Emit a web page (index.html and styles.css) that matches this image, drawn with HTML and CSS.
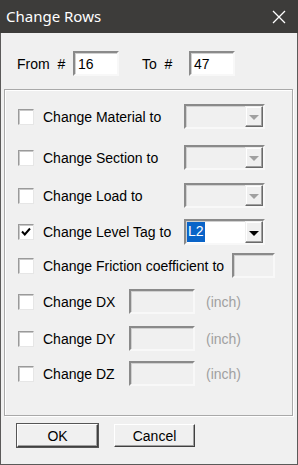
FILE: index.html
```html
<!DOCTYPE html>
<html>
<head>
    <title>Change Rows</title>
    <link rel="stylesheet" href="styles.css">
</head>
<body>
    <div class="window">
        <div class="titlebar">
            <span class="title">Change Rows</span>
            <span class="close">
                <svg width="14" height="14" viewBox="0 0 14 14"><path d="M1 1 L13 13 M13 1 L1 13" stroke="#fff" stroke-width="1.3"/></svg>
            </span>
        </div>

        <div class="content">
            <!-- Row range -->
            <div class="range">
                <span class="range-label from-label">From&nbsp; #</span>
                <div class="edit range-edit">16</div>
                <span class="range-label to-label">To&nbsp; #</span>
                <div class="edit range-edit">47</div>
            </div>

            <!-- Options -->
            <div class="group">
                <div class="row">
                    <span class="check"></span>
                    <span class="label">Change Material to</span>
                    <div class="combo disabled"><span class="combo-text"></span><span class="combo-btn"><i class="arrow"></i></span></div>
                </div>
                <div class="row">
                    <span class="check"></span>
                    <span class="label">Change Section to</span>
                    <div class="combo disabled"><span class="combo-text"></span><span class="combo-btn"><i class="arrow"></i></span></div>
                </div>
                <div class="row">
                    <span class="check"></span>
                    <span class="label">Change Load to</span>
                    <div class="combo disabled"><span class="combo-text"></span><span class="combo-btn"><i class="arrow"></i></span></div>
                </div>
                <div class="row">
                    <span class="check checked">
                        <svg width="10" height="10" viewBox="0 0 10 10"><path d="M1 4.5 L3.8 7.5 L9 1.5" fill="none" stroke="#000" stroke-width="2"/></svg>
                    </span>
                    <span class="label">Change Level Tag to</span>
                    <div class="combo level"><span class="combo-text"><span class="sel">L2</span></span><span class="combo-btn"><i class="arrow"></i></span></div>
                </div>
                <div class="row">
                    <span class="check"></span>
                    <span class="label">Change Friction coefficient to</span>
                    <div class="edit disabled friction"></div>
                </div>
                <div class="row">
                    <span class="check"></span>
                    <span class="label dlabel">Change DX</span>
                    <div class="edit disabled delta"></div>
                    <span class="unit">(inch)</span>
                </div>
                <div class="row">
                    <span class="check"></span>
                    <span class="label dlabel">Change DY</span>
                    <div class="edit disabled delta"></div>
                    <span class="unit">(inch)</span>
                </div>
                <div class="row">
                    <span class="check"></span>
                    <span class="label dlabel">Change DZ</span>
                    <div class="edit disabled delta"></div>
                    <span class="unit">(inch)</span>
                </div>
            </div>

            <div class="buttons">
                <div class="button default">OK</div>
                <div class="button">Cancel</div>
            </div>
        </div>
    </div>
</body>
</html>
```

FILE: styles.css
```css
body {
    margin: 0;
    font-family: "Liberation Sans", Arial, sans-serif;
    font-size: 14px;
    color: #000;
    background: #f0f0f0;
}
.window {
    width: 298px;
    height: 465px;
    box-sizing: border-box;
    border: 1px solid #5b5a59;
    border-top: none;
    background: #f0f0f0;
    display: flex;
    flex-direction: column;
}
.titlebar {
    height: 33px;
    background: #3d3c3a;
    display: flex;
    align-items: center;
    justify-content: space-between;
    padding: 0 12px 0 6px;
    margin: 0 -1px;
}
.title {
    color: #fff;
    font-family: "Noto Sans", "Open Sans", sans-serif;
    font-size: 15px;
    padding-bottom: 2px;
}
.close {
    display: flex;
}
.content {
    flex: 1;
    display: flex;
    flex-direction: column;
}
.range {
    display: flex;
    align-items: center;
    margin-top: 18px;
    padding-left: 16px;
    height: 25px;
}
.from-label {
    width: 56px;
}
.to-label {
    margin-left: 23px;
    width: 47px;
}
.edit {
    box-sizing: border-box;
    height: 25px;
    background: #fff;
    border-style: solid;
    border-width: 2px;
    border-color: #8a8a8a #f8f8f8 #f8f8f8 #8a8a8a;
    box-shadow: inset 1px 1px 0 #d0d0d0;
    padding: 2px 3px;
    line-height: 18px;
}
.range-edit {
    width: 46px;
}
.edit.disabled {
    background: #f0f0f0;
}
.group {
    margin: 13px 4px 0 3px;
    height: 327px;
    box-sizing: border-box;
    border: 1px solid #a9a9a9;
    box-shadow: inset 1px 1px 0 #fff, 1px 1px 0 #fff;
    padding-left: 13px;
}
.row {
    display: flex;
    align-items: center;
    height: 25px;
}
.row:nth-child(1) { margin-top: 14px; }
.row:nth-child(2) { margin-top: 16px; }
.row:nth-child(3) { margin-top: 13px; }
.row:nth-child(4) { margin-top: 11px; height: 26px; }
.row:nth-child(5) { margin-top: 8px; }
.row:nth-child(6) { margin-top: 11px; }
.row:nth-child(7) { margin-top: 12px; }
.row:nth-child(8) { margin-top: 10px; }
.check {
    width: 16px;
    height: 16px;
    box-sizing: border-box;
    background: #fff;
    border-style: solid;
    border-width: 1px;
    border-color: #9a9a9a #e6e6e6 #e6e6e6 #9a9a9a;
    box-shadow: inset 1px 1px 0 #c8c8c8;
    display: flex;
    align-items: center;
    justify-content: center;
    flex-shrink: 0;
}
.label {
    margin-left: 9px;
    white-space: nowrap;
}
.combo {
    box-sizing: border-box;
    width: 81px;
    height: 25px;
    margin-left: auto;
    margin-right: 27px;
    display: flex;
    border-style: solid;
    border-width: 2px;
    border-color: #8a8a8a #f8f8f8 #f8f8f8 #8a8a8a;
    box-shadow: inset 1px 1px 0 #d0d0d0;
    background: #fff;
}
.combo.disabled {
    background: #f0f0f0;
}
.combo.level {
    height: 26px;
}
.combo-text {
    flex: 1;
    padding: 1px 0 0 1px;
    line-height: 19px;
}
.sel {
    display: inline-block;
    background: #0a64c8;
    color: #fff;
    padding: 0 1px;
    height: 20px;
}
.combo-btn {
    width: 16px;
    background: #f0f0f0;
    border-style: solid;
    border-width: 1px;
    border-color: #f0f0f0 #6a6a6a #6a6a6a #f0f0f0;
    box-shadow: inset -1px -1px 0 #a0a0a0, inset 1px 1px 0 #fff;
    display: flex;
    align-items: center;
    justify-content: center;
}
.arrow {
    width: 0;
    height: 0;
    border-left: 5px solid transparent;
    border-right: 5px solid transparent;
    border-top: 5px solid #000;
    margin-top: 2px;
}
.disabled .arrow {
    border-top-color: #a0a0a0;
}
.friction {
    width: 43px;
    margin-left: auto;
    margin-right: 17px;
}
.dlabel {
    width: 86px;
}
.delta {
    width: 66px;
}
.unit {
    margin-left: 11px;
    color: #a0a0a0;
}
.buttons {
    display: flex;
    padding-left: 16px;
    margin-top: 8px;
    gap: 16px;
}
.button {
    box-sizing: border-box;
    width: 81px;
    height: 23px;
    border-style: solid;
    border-width: 1px;
    border-color: #fff #404040 #404040 #fff;
    box-shadow: inset -1px -1px 0 #a0a0a0;
    background: #f0f0f0;
    display: flex;
    align-items: center;
    justify-content: center;
}
.button.default {
    outline: 1px solid #555;
}
```
